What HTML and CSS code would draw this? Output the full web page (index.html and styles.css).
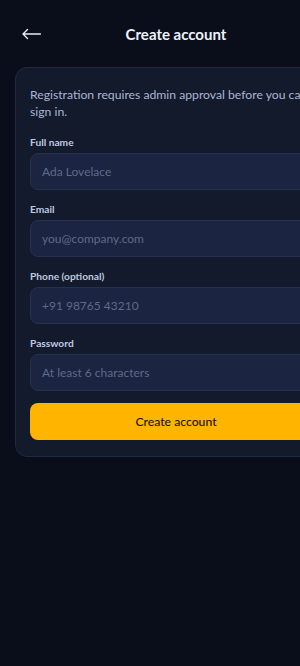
FILE: index.html
```html
<!DOCTYPE html>
<html lang="en">
<head>
<meta charset="utf-8">
<title>Create account</title>
<link rel="stylesheet" href="styles.css">
</head>
<body>
<div class="app">
  <header class="topbar">
    <button class="back" aria-label="Back">
      <svg class="back-icon" width="19" height="12" viewBox="0 0 19 12" aria-hidden="true">
        <path d="M1 6H18.5M1 6L5.5 1.5M1 6L5.5 10.5" fill="none" stroke="#e6ebf5" stroke-width="1.4" stroke-linecap="round" stroke-linejoin="round"/>
      </svg>
    </button>
    <h1 class="title">Create account</h1>
    <span class="spacer"></span>
  </header>
  <main class="card">
    <p class="note">Registration requires admin approval before you can sign in.</p>
    <label class="field">
      <span class="label">Full name</span>
      <input class="input" type="text" placeholder="Ada Lovelace">
    </label>
    <label class="field">
      <span class="label">Email</span>
      <input class="input" type="email" placeholder="you@company.com">
    </label>
    <label class="field">
      <span class="label">Phone (optional)</span>
      <input class="input" type="tel" placeholder="+91 98765 43210">
    </label>
    <label class="field">
      <span class="label">Password</span>
      <input class="input" type="password" placeholder="At least 6 characters">
    </label>
    <button class="submit" type="button">Create account</button>
  </main>
</div>
</body>
</html>
```
FILE: styles.css
```css
html, body {
  margin: 0;
  padding: 0;
  background: #0a0e1a;
  overflow: hidden;
}
body {
  font-family: Lato, "Noto Sans", sans-serif;
  color: #e6ebf5;
  height: 666px;
}
.app {
  width: 352px;
  box-sizing: border-box;
  padding: 0 15px;
}
.topbar {
  height: 67px;
  display: flex;
  align-items: center;
  justify-content: space-between;
}
.back {
  background: none;
  border: 0;
  padding: 0 0 0 7px;
  width: 40px;
  height: 20px;
  display: flex;
  align-items: center;
  cursor: pointer;
}
.back-icon {
  display: block;
  margin-top: 1px;
}
.title {
  margin: 0;
  font-size: 15px;
  font-weight: 700;
  color: #eef2fb;
}
.spacer {
  width: 40px;
}
.card {
  background: #131a2b;
  border: 1px solid #1f2940;
  border-radius: 12px;
  padding: 18px 14px 16px;
  display: flex;
  flex-direction: column;
}
.note {
  margin: 0 0 15px;
  font-size: 12.2px;
  line-height: 17px;
  color: #a9b6d4;
}
.field {
  display: flex;
  flex-direction: column;
  gap: 4px;
  margin-bottom: 12px;
}
.label {
  font-size: 10.2px;
  line-height: 14px;
  font-weight: 700;
  color: #bfc9e2;
}
.input {
  height: 37px;
  box-sizing: border-box;
  background: #1b2440;
  border: 1px solid #253150;
  border-radius: 8px;
  padding: 0 11px;
  font-family: inherit;
  font-size: 12px;
  color: #e6ebf5;
  outline: none;
}
.input::placeholder {
  color: #5e6b8a;
}
.submit {
  height: 37px;
  border: 0;
  border-radius: 8px;
  background: #ffb400;
  color: #1a1200;
  font-family: inherit;
  font-size: 12.2px;
  font-weight: 500;
}
```
